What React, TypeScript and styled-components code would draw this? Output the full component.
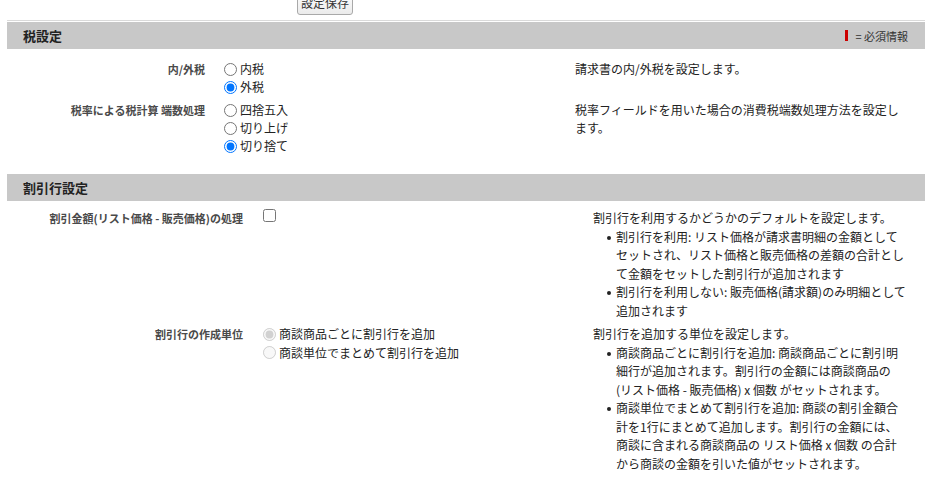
import React from "react";
import styled, { createGlobalStyle } from "styled-components";

const Global = createGlobalStyle`
  html, body { margin: 0; padding: 0; background: #fff; }
  body {
    font-family: "Noto Sans CJK JP", "Noto Sans", "Liberation Sans", sans-serif;
    color: #222;
    font-size: 12px;
  }
`;

const Page = styled.div`
  padding: 0 5px 0 7px;
`;

const ButtonRow = styled.div`
  height: 20px;
  display: flex;
  padding-left: 290px;
`;

const SaveButton = styled.button`
  margin-top: -9px;
  height: 24px;
  width: 56px;
  padding: 0;
  border: 1px solid #a9a9a9;
  border-radius: 3px;
  background: linear-gradient(#ffffff, #ebebeb);
  font-family: "Noto Sans CJK JP", sans-serif;
  font-size: 12px;
  color: #333;
  line-height: 14px;
  white-space: nowrap;
`;

const Section = styled.section<{ $rule?: boolean; $gapTop: number }>`
  margin-top: ${(p) => p.$gapTop}px;
  ${(p) => (p.$rule ? "border-top: 1px solid #dadada; padding-top: 1px;" : "")}
`;

const Bar = styled.div`
  height: 27px;
  background: #c8c8c8;
  display: flex;
  align-items: center;
  justify-content: space-between;
  padding: 0 17px 0 16px;
`;

const BarTitle = styled.h2`
  margin: 0;
  font-size: 13px;
  font-weight: 700;
  color: #222;
  line-height: 1;
`;

const Required = styled.span`
  display: flex;
  align-items: center;
  gap: 7px;
  font-size: 11px;
  color: #333;
`;

const RequiredMark = styled.span`
  width: 3px;
  height: 11px;
  background: #c00;
`;

const Body = styled.div<{ $padTop: number }>`
  padding-top: ${(p) => p.$padTop}px;
`;

const Row = styled.div<{ $cols: string; $lh: number }>`
  display: grid;
  grid-template-columns: ${(p) => p.$cols};
  padding: 2px 0 3px;
  line-height: ${(p) => p.$lh}px;
`;

const Label = styled.div<{ $pr: number }>`
  text-align: right;
  padding-right: ${(p) => p.$pr}px;
  font-size: 11px;
  font-weight: 700;
  color: #4a4a4a;
  white-space: nowrap;
`;

const Data = styled.div`
  display: flex;
  flex-direction: column;
`;

const Option = styled.label`
  display: flex;
  align-items: center;
  font-size: 12px;
  color: #222;
  white-space: nowrap;
`;

const Radio = styled.input.attrs({ type: "radio" })`
  margin: 0 3px 0 0;
  width: 13px;
  height: 13px;
`;

const Check = styled.input.attrs({ type: "checkbox" })`
  margin: 0;
  width: 13px;
  height: 13px;
`;

const Desc = styled.div`
  font-size: 12px;
  color: #222;
`;

const Line = styled.span`
  display: block;
  white-space: nowrap;
`;

const List = styled.ul`
  margin: 0;
  padding-left: 23px;
  list-style: none;
`;

const Item = styled.li`
  position: relative;
  &::before {
    content: "";
    position: absolute;
    left: -9px;
    top: 8px;
    width: 4px;
    height: 4px;
    border-radius: 50%;
    background: #222;
  }
`;

const Lines = ({ lines }: { lines: string[] }) => (
  <>
    {lines.map((l, i) => (
      <Line key={i}>{l}</Line>
    ))}
  </>
);

const S1 = "217px 351px 1fr";
const S2 = "256px 330px 1fr";

export default function App() {
  return (
    <>
      <Global />
      <Page>
        <ButtonRow>
          <SaveButton>設定保存</SaveButton>
        </ButtonRow>

        <Section $rule $gapTop={0}>
          <Bar>
            <BarTitle>税設定</BarTitle>
            <Required>
              <RequiredMark />= 必須情報
            </Required>
          </Bar>
          <Body $padTop={9}>
            <Row $cols={S1} $lh={18}>
              <Label $pr={19}>内/外税</Label>
              <Data>
                <Option>
                  <Radio name="tax" />内税
                </Option>
                <Option>
                  <Radio name="tax" defaultChecked />外税
                </Option>
              </Data>
              <Desc>
                <Lines lines={["請求書の内/外税を設定します。"]} />
              </Desc>
            </Row>
            <Row $cols={S1} $lh={18}>
              <Label $pr={19}>税率による税計算 端数処理</Label>
              <Data>
                <Option>
                  <Radio name="round" />四捨五入
                </Option>
                <Option>
                  <Radio name="round" />切り上げ
                </Option>
                <Option>
                  <Radio name="round" defaultChecked />切り捨て
                </Option>
              </Data>
              <Desc>
                <Lines
                  lines={[
                    "税率フィールドを用いた場合の消費税端数処理方法を設定し",
                    "ます。",
                  ]}
                />
              </Desc>
            </Row>
          </Body>
        </Section>

        <Section $gapTop={16}>
          <Bar>
            <BarTitle>割引行設定</BarTitle>
          </Bar>
          <Body $padTop={6}>
            <Row $cols={S2} $lh={18.5}>
              <Label $pr={20}>割引金額(リスト価格 - 販売価格)の処理</Label>
              <Data>
                <Option>
                  <Check />
                </Option>
              </Data>
              <Desc>
                <Lines lines={["割引行を利用するかどうかのデフォルトを設定します。"]} />
                <List>
                  <Item>
                    <Lines
                      lines={[
                        "割引行を利用: リスト価格が請求書明細の金額として",
                        "セットされ、リスト価格と販売価格の差額の合計とし",
                        "て金額をセットした割引行が追加されます",
                      ]}
                    />
                  </Item>
                  <Item>
                    <Lines
                      lines={[
                        "割引行を利用しない: 販売価格(請求額)のみ明細として",
                        "追加されます",
                      ]}
                    />
                  </Item>
                </List>
              </Desc>
            </Row>
            <Row $cols={S2} $lh={18.5}>
              <Label $pr={20}>割引行の作成単位</Label>
              <Data>
                <Option>
                  <Radio name="unit" defaultChecked disabled />商談商品ごとに割引行を追加
                </Option>
                <Option>
                  <Radio name="unit" disabled />商談単位でまとめて割引行を追加
                </Option>
              </Data>
              <Desc>
                <Lines lines={["割引行を追加する単位を設定します。"]} />
                <List>
                  <Item>
                    <Lines
                      lines={[
                        "商談商品ごとに割引行を追加: 商談商品ごとに割引明",
                        "細行が追加されます。割引行の金額には商談商品の",
                        "(リスト価格 - 販売価格) x 個数 がセットされます。",
                      ]}
                    />
                  </Item>
                  <Item>
                    <Lines
                      lines={[
                        "商談単位でまとめて割引行を追加: 商談の割引金額合",
                        "計を1行にまとめて追加します。割引行の金額には、",
                        "商談に含まれる商談商品の リスト価格 x 個数 の合計",
                        "から商談の金額を引いた値がセットされます。",
                      ]}
                    />
                  </Item>
                </List>
              </Desc>
            </Row>
          </Body>
        </Section>
      </Page>
    </>
  );
}
